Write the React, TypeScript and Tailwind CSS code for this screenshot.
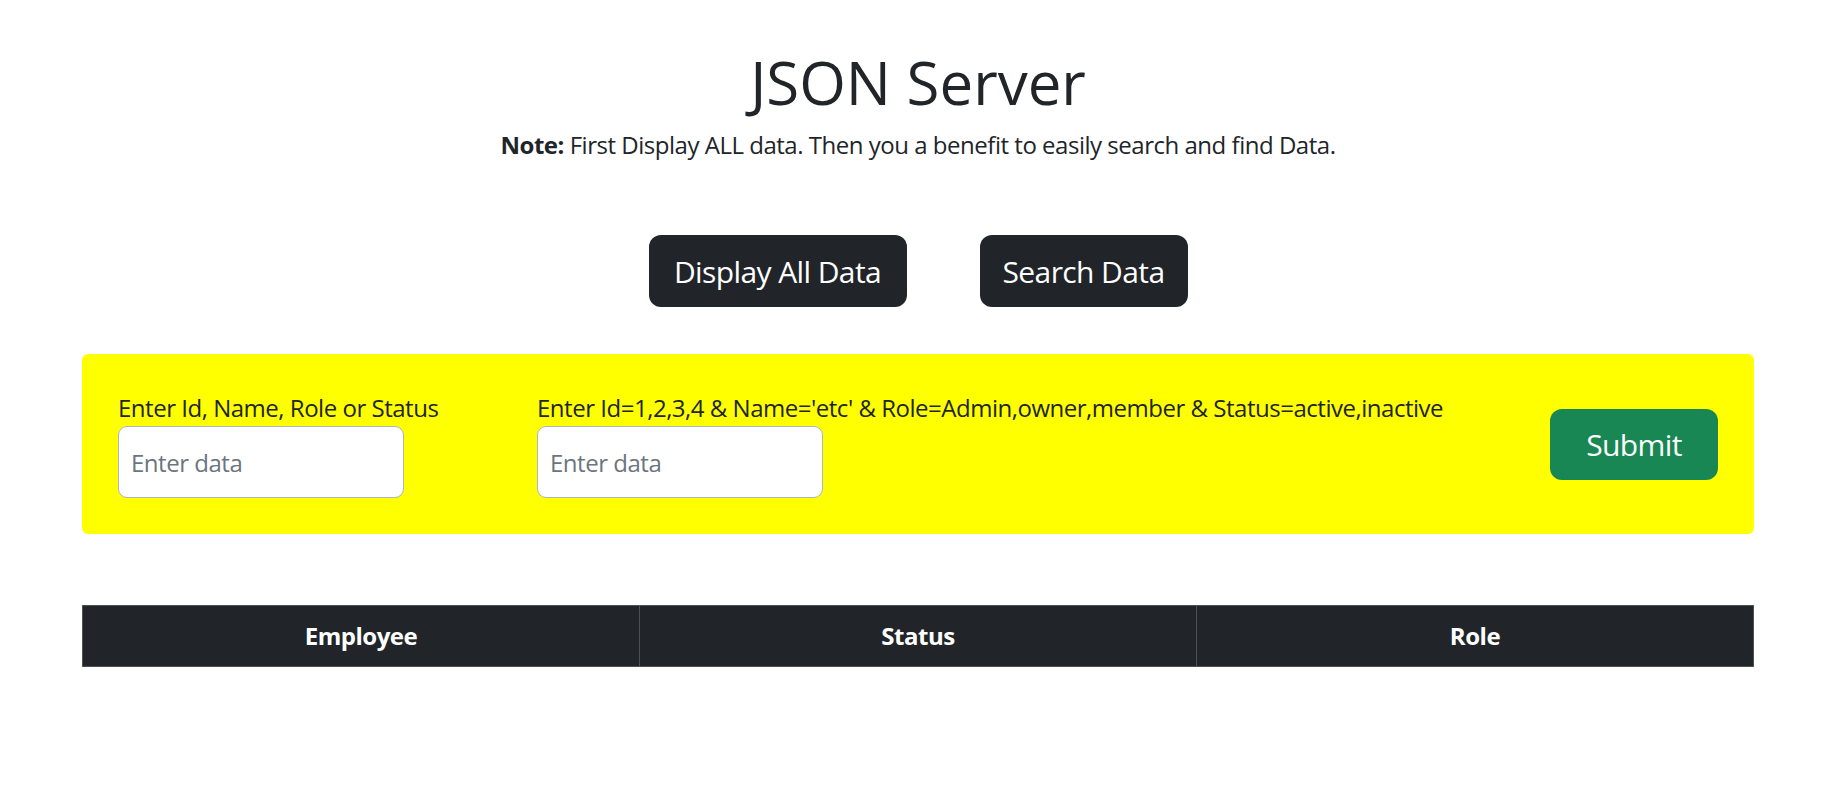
import React from 'react';

const font = { fontFamily: '"Segoe UI", "Open Sans", "Noto Sans", sans-serif' };

const SearchField: React.FC<{ label: string; className?: string }> = ({ label, className }) => (
  <div className={className}>
    <label className="block text-[24px] leading-[36px] whitespace-nowrap">{label}</label>
    <input
      type="text"
      placeholder="Enter data"
      className="block w-[286px] h-[72px] px-[12px] text-[24px] tracking-[-0.02em] bg-white border border-[#adb5bd] rounded-[9px] placeholder:text-[#6c757d] outline-none"
    />
  </div>
);

const App = () => {
  return (
    <div className="min-h-screen bg-white text-[#212529] tracking-[-0.03em]" style={font}>
      <div className="px-[82px] pt-[46px]">
        <div className="text-center">
          <h1 className="text-[60px] leading-[72px] font-medium tracking-normal mb-[9px]">JSON Server</h1>
          <p className="text-[24px] leading-[36px]">
            <b className="font-bold">Note:</b> First Display ALL data. Then you a benefit to easily search and find Data.
          </p>
        </div>

        <div className="flex justify-center gap-[73px] mt-[72px]">
          <button className="h-[72px] w-[258px] rounded-[12px] bg-[#212529] text-white text-[30px] tracking-[-0.02em]">
            Display All Data
          </button>
          <button className="h-[72px] w-[208px] rounded-[12px] bg-[#212529] text-white text-[30px] tracking-[-0.02em]">
            Search Data
          </button>
        </div>

        <div className="mt-[47px] bg-[#ffff00] rounded-[6px] p-[36px] flex items-center">
          <SearchField label="Enter Id, Name, Role or Status" className="w-[419px]" />
          <SearchField
            label="Enter Id=1,2,3,4 & Name='etc' & Role=Admin,owner,member & Status=active,inactive"
            className="flex-1"
          />
          <button className="h-[71px] w-[168px] rounded-[12px] bg-[#198754] text-white text-[30px] tracking-[-0.02em]">
            Submit
          </button>
        </div>

        <table className="w-full table-fixed mt-[71px] border-collapse">
          <thead>
            <tr className="bg-[#212529] text-white">
              <th className="border border-[#4d5154] py-[12px] text-[24px] leading-[36px] font-bold">Employee</th>
              <th className="border border-[#4d5154] py-[12px] text-[24px] leading-[36px] font-bold">Status</th>
              <th className="border border-[#4d5154] py-[12px] text-[24px] leading-[36px] font-bold">Role</th>
            </tr>
          </thead>
        </table>
      </div>
    </div>
  );
};

export default App;
